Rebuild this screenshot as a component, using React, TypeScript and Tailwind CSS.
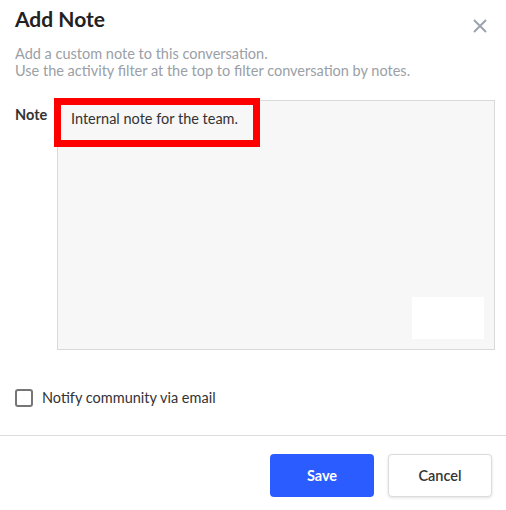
import React from "react";

export default function App() {
  return (
    <div
      className="w-[506px] h-[510px] bg-white flex flex-col text-[#333]"
      style={{ fontFamily: "Lato, 'Open Sans', sans-serif" }}
    >
      <div className="px-[15px] pt-[6px]">
        <div className="flex items-start justify-between">
          <h1 className="text-[21px] leading-[26px] font-bold text-[#222]">Add Note</h1>
          <button className="mt-[12px] mr-[3px] text-[#9ca3af]" aria-label="Close">
            <svg width="16" height="16" viewBox="0 0 16 16" fill="none" stroke="currentColor" strokeWidth="2">
              <path d="M2 2 L14 14 M14 2 L2 14" />
            </svg>
          </button>
        </div>
        <p className="mt-[11px] text-[14.5px] leading-[17px] text-[#9aa0a6]">
          Add a custom note to this conversation.
          <br />
          Use the activity filter at the top to filter conversation by notes.
        </p>
        <div className="mt-[21px] flex">
          <label className="w-[42px] shrink-0 pt-[5px] text-[14.5px] leading-[20px] font-bold text-[#333]">Note</label>
          <div className="relative shrink-0 w-[438px] h-[250px] border border-[#d9d9d9] bg-[#f7f7f7]">
            <div className="pl-[13px] pt-[8px] text-[14.5px] leading-[20px] text-[#333]">
              Internal note for the team.
            </div>
            <div className="absolute left-[-4px] top-[-3px] w-[206px] h-[49px] border-[7px] border-[#ff0000]" />
            <div className="absolute right-[10px] bottom-[10px] w-[72px] h-[42px] bg-white" />
          </div>
        </div>
        <div className="mt-[39px] flex items-center gap-[9px]">
          <span className="w-[18px] h-[18px] shrink-0 rounded-[3px] border-2 border-[#767676] bg-white" />
          <span className="text-[14.5px] leading-[18px] text-[#333]">Notify community via email</span>
        </div>
      </div>
      <div className="mt-[28px] border-t border-[#dddddd]" />
      <div className="flex justify-end gap-[14px] pr-[14px] pt-[18px]">
        <button className="w-[104px] h-[43px] rounded-[4px] bg-[#2b5cff] text-white text-[14.5px] font-bold">
          Save
        </button>
        <button className="w-[104px] h-[43px] rounded-[4px] bg-white border border-[#dcdcdc] text-[14.5px] font-semibold text-[#333] shadow-[0_1px_3px_rgba(0,0,0,0.12)]">
          Cancel
        </button>
      </div>
    </div>
  );
}
